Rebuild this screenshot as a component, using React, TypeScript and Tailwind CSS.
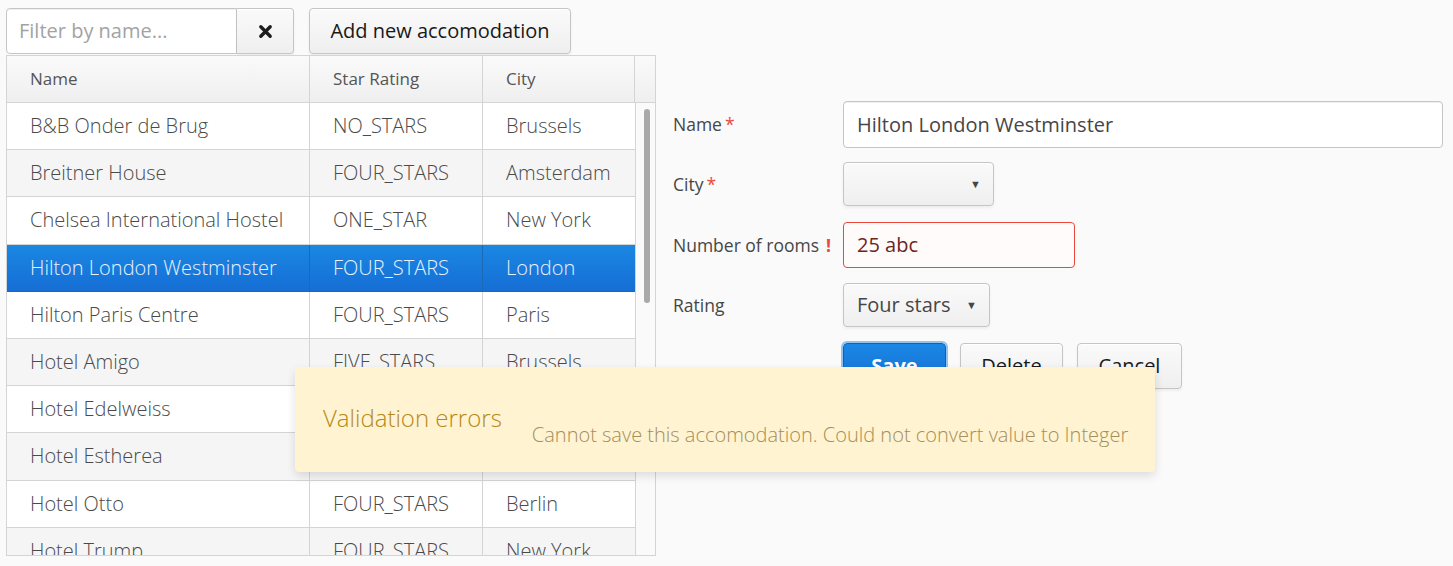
import React from "react";

type Row = { name: string; rating: string; city: string };

const rows: Row[] = [
  { name: "B&B Onder de Brug", rating: "NO_STARS", city: "Brussels" },
  { name: "Breitner House", rating: "FOUR_STARS", city: "Amsterdam" },
  { name: "Chelsea International Hostel", rating: "ONE_STAR", city: "New York" },
  { name: "Hilton London Westminster", rating: "FOUR_STARS", city: "London" },
  { name: "Hilton Paris Centre", rating: "FOUR_STARS", city: "Paris" },
  { name: "Hotel Amigo", rating: "FIVE_STARS", city: "Brussels" },
  { name: "Hotel Edelweiss", rating: "THREE_STARS", city: "Zurich" },
  { name: "Hotel Estherea", rating: "FOUR_STARS", city: "Amsterdam" },
  { name: "Hotel Otto", rating: "FOUR_STARS", city: "Berlin" },
  { name: "Hotel Trump", rating: "FOUR_STARS", city: "New York" },
];

// valo-ish button look, height set where used
const btn =
  "rounded-[4px] border border-[#c5c5c5] bg-gradient-to-b from-[#fafafa] to-[#efefef] shadow-[inset_0_1px_0_#fff,0_2px_3px_rgba(0,0,0,0.05)] text-[20px] text-[#191919]";

function SelectBox({ value, width }: { value: string; width: string }) {
  return (
    <div className={`${btn} ${width} h-[44px] flex items-center justify-between pl-[13px] pr-[12px]`}>
      <span className="text-[#464646]">{value}</span>
      <span className="text-[11px] text-[#464646]">▼</span>
    </div>
  );
}

function Grid() {
  return (
    <div className="w-[650px] h-[501px] border border-[#d4d4d4] bg-[#fafafa] overflow-hidden">
      <div className="flex h-[47px] border-b border-[#d4d4d4] bg-gradient-to-b from-[#fafafa] to-[#efefef] text-[17px] text-[#555]">
        <div className="w-[303px] flex items-center pl-[23px] border-r border-[#d4d4d4]">Name</div>
        <div className="w-[173px] flex items-center pl-[23px] border-r border-[#d4d4d4]">Star Rating</div>
        <div className="w-[152px] flex items-center pl-[23px] border-r border-[#d4d4d4]">City</div>
        <div className="w-[20px]" />
      </div>
      <div className="flex">
        <div className="w-[628px]">
          {rows.map((r, i) => {
            const selected = i === 3;
            const bg = selected
              ? "bg-gradient-to-b from-[#1b87e3] to-[#166ed5] text-[#e8f2fb]"
              : i % 2 === 1
              ? "bg-[#f5f5f5] text-[#4a4a4a]"
              : "bg-white text-[#4a4a4a]";
            const line = selected ? "border-[#1d69b4]" : "border-[#d4d4d4]";
            return (
              <div key={r.name} className={`flex h-[47.2px] border-b ${line} ${bg} text-[20px] font-light`}>
                <div className={`w-[303px] flex items-center pl-[23px] border-r ${line} whitespace-nowrap`}>{r.name}</div>
                <div className={`w-[173px] flex items-center pl-[23px] border-r ${line} whitespace-nowrap`}>{r.rating}</div>
                <div className="w-[152px] flex items-center pl-[23px] whitespace-nowrap">{r.city}</div>
              </div>
            );
          })}
        </div>
        <div className="w-[20px] border-l border-[#d4d4d4] pt-[6px] pl-[8px]">
          <div className="w-[6px] h-[194px] rounded-full bg-[#a9a9a9]" />
        </div>
      </div>
    </div>
  );
}

function FormRow({ label, mark, children, mt }: { label: string; mark?: React.ReactNode; children: React.ReactNode; mt: string }) {
  return (
    <div className={`flex items-center ${mt}`}>
      <div className="w-[170px] text-[17.5px] text-[#464646] flex items-center">
        {label}
        {mark}
      </div>
      {children}
    </div>
  );
}

export default function App() {
  const star = <span className="text-[#ed473b] ml-[3px]">*</span>;
  return (
    <div className="relative w-[1453px] h-[566px] bg-[#fafafa] font-['Open_Sans',sans-serif] text-[#464646] overflow-hidden">
      <div className="flex">
        <div className="ml-[6px] pt-[8px] flex flex-col">
          <div className="flex items-start h-[47px]">
            <div className="flex h-[46px]">
              <div className="w-[231px] h-full rounded-l-[4px] border border-[#c5c5c5] bg-white flex items-center pl-[12px] text-[20px] text-[#a3a3a3] shadow-[inset_0_1px_0_#f0f0f0]">
                Filter by name...
              </div>
              <div className={`${btn} h-[46px] w-[57px] rounded-l-none border-l-0 flex items-center justify-center`}>
                <svg width="15" height="15" viewBox="0 0 16 16">
                  <path d="M3 3 L13 13 M13 3 L3 13" stroke="#1d1d1d" strokeWidth="3.6" strokeLinecap="round" />
                </svg>
              </div>
            </div>
            <button className={`${btn} h-[46px] ml-[15px] w-[262px]`}>Add new accomodation</button>
          </div>
          <Grid />
        </div>
        <div className="ml-[17px] pt-[101px] w-[770px]">
          <FormRow label="Name" mark={star} mt="">
            <div className="w-[600px] h-[47px] rounded-[4px] border border-[#c5c5c5] bg-white flex items-center pl-[13px] text-[20px] text-[#464646] shadow-[inset_0_1px_0_#f0f0f0]">
              Hilton London Westminster
            </div>
          </FormRow>
          <FormRow label="City" mark={star} mt="mt-[14px]">
            <SelectBox value="" width="w-[151px]" />
          </FormRow>
          <FormRow label="Number of rooms" mark={<span className="text-[#ed473b] font-bold ml-[7px]">!</span>} mt="mt-[16px]">
            <div className="w-[232px] h-[46px] rounded-[4px] border border-[#ed473b] bg-[#fffbfb] flex items-center pl-[13px] text-[20px] text-[#6c2621]">
              25 abc
            </div>
          </FormRow>
          <FormRow label="Rating" mark={null} mt="mt-[15px]">
            <SelectBox value="Four stars" width="w-[147px]" />
          </FormRow>
          <div className="flex mt-[16px] ml-[170px] gap-[14px]">
            <button className="w-[103px] h-[46px] rounded-[4px] border border-[#1362b1] bg-gradient-to-b from-[#1b87e3] to-[#166ed5] text-white font-bold text-[20px] shadow-[0_0_0_2px_rgba(25,125,225,0.45)]">
              Save
            </button>
            <button className={`${btn} h-[46px] w-[103px]`}>Delete</button>
            <button className={`${btn} h-[46px] w-[105px]`}>Cancel</button>
          </div>
        </div>
      </div>

      <div className="absolute left-[295px] top-[367px] w-[860px] h-[105px] rounded-[4px] bg-[#fff3d2] shadow-[0_4px_10px_rgba(0,0,0,0.12)] flex items-start px-[28px] pt-[36px]">
        <div className="text-[24px] leading-[30px] font-light text-[#b58a14] whitespace-nowrap">Validation errors</div>
        <div className="ml-[30px] mt-[19px] text-[20px] leading-[26px] font-light text-[#a38f5a] whitespace-nowrap">
          Cannot save this accomodation. Could not convert value to Integer
        </div>
      </div>
    </div>
  );
}
